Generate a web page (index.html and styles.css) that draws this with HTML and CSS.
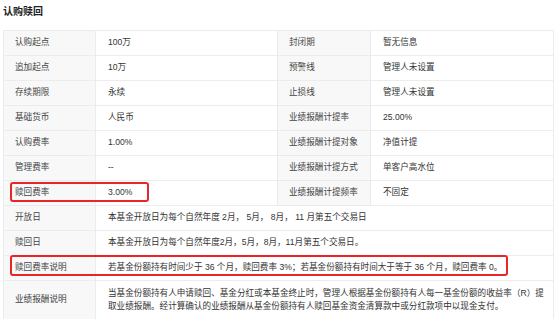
FILE: index.html
```html
<!DOCTYPE html>
<html lang="zh-CN">
<head>
<meta charset="utf-8">
<title>认购赎回</title>
<link rel="stylesheet" href="styles.css">
</head>
<body>
<div class="page">
  <h2 class="title">认购赎回</h2>
  <table class="info">
    <colgroup>
      <col class="c1"><col class="c2"><col class="c3"><col class="c4">
    </colgroup>
    <tr><td class="lb">认购起点</td><td>100万</td><td class="lb">封闭期</td><td>暂无信息</td></tr>
    <tr><td class="lb">追加起点</td><td>10万</td><td class="lb">预警线</td><td>管理人未设置</td></tr>
    <tr><td class="lb">存续期限</td><td>永续</td><td class="lb">止损线</td><td>管理人未设置</td></tr>
    <tr><td class="lb">基础货币</td><td>人民币</td><td class="lb">业绩报酬计提率</td><td>25.00%</td></tr>
    <tr><td class="lb">认购费率</td><td>1.00%</td><td class="lb">业绩报酬计提对象</td><td>净值计提</td></tr>
    <tr><td class="lb">管理费率</td><td>--</td><td class="lb">业绩报酬计提方式</td><td>单客户高水位</td></tr>
    <tr><td class="lb">赎回费率</td><td>3.00%</td><td class="lb">业绩报酬计提频率</td><td>不固定</td></tr>
    <tr><td class="lb">开放日</td><td colspan="3">本基金开放日为每个自然年度 2月，&nbsp;5月，&nbsp;8月，&nbsp;11 月第五个交易日</td></tr>
    <tr><td class="lb">赎回日</td><td colspan="3">本基金开放日为每个自然年度2月，5月，8月，11月第五个交易日。</td></tr>
    <tr><td class="lb">赎回费率说明</td><td colspan="3">若基金份额持有时间少于 36 个月，赎回费率 3%；若基金份额持有时间大于等于 36 个月，赎回费率 0。</td></tr>
    <tr class="tall"><td class="lb">业绩报酬说明</td><td colspan="3">当基金份额持有人申请赎回、基金分红或本基金终止时，管理人根据基金份额持有人每一基金份额的收益率（R）提取业绩报酬。经计算确认的业绩报酬从基金份额持有人赎回基金资金清算款中或分红款项中以现金支付。</td></tr>
  </table>
  <div class="mark mark-fee"></div>
  <div class="mark mark-note"></div>
</div>
</body>
</html>
```

FILE: styles.css
```css
html, body {
  margin: 0;
  padding: 0;
  background: #fff;
}
.page {
  position: relative;
  padding: 5px 1px 0 3px;
  font-family: "Liberation Sans", "Noto Sans CJK SC", sans-serif;
  color: #333;
}
.title {
  margin: 0 0 11px 0;
  font-size: 10px;
  line-height: 14px;
  font-weight: bold;
  color: #222;
}
.info {
  width: 550px;
  border-collapse: collapse;
  table-layout: fixed;
  font-size: 8.6px;
  border: 1px solid #ececec;
}
.c1 { width: 92px; }
.c2 { width: 182px; }
.c3 { width: 93px; }
.c4 { width: 183px; }
.info td {
  height: 24px;
  padding: 0 6px 0 12px;
  border: 1px solid #ececec;
  line-height: 13.5px;
  vertical-align: middle;
  color: #333;
}
.info td.lb {
  background: #f8f8f8;
  color: #444;
  padding-left: 11px;
}
.info tr.tall td {
  height: 38px;
}
.mark {
  position: absolute;
  border: 2px solid #e8262a;
  border-radius: 3px;
  box-sizing: border-box;
}
.mark-fee {
  left: 10px;
  top: 182px;
  width: 139px;
  height: 20px;
}
.mark-note {
  left: 10px;
  top: 255px;
  width: 498px;
  height: 21px;
}
```
